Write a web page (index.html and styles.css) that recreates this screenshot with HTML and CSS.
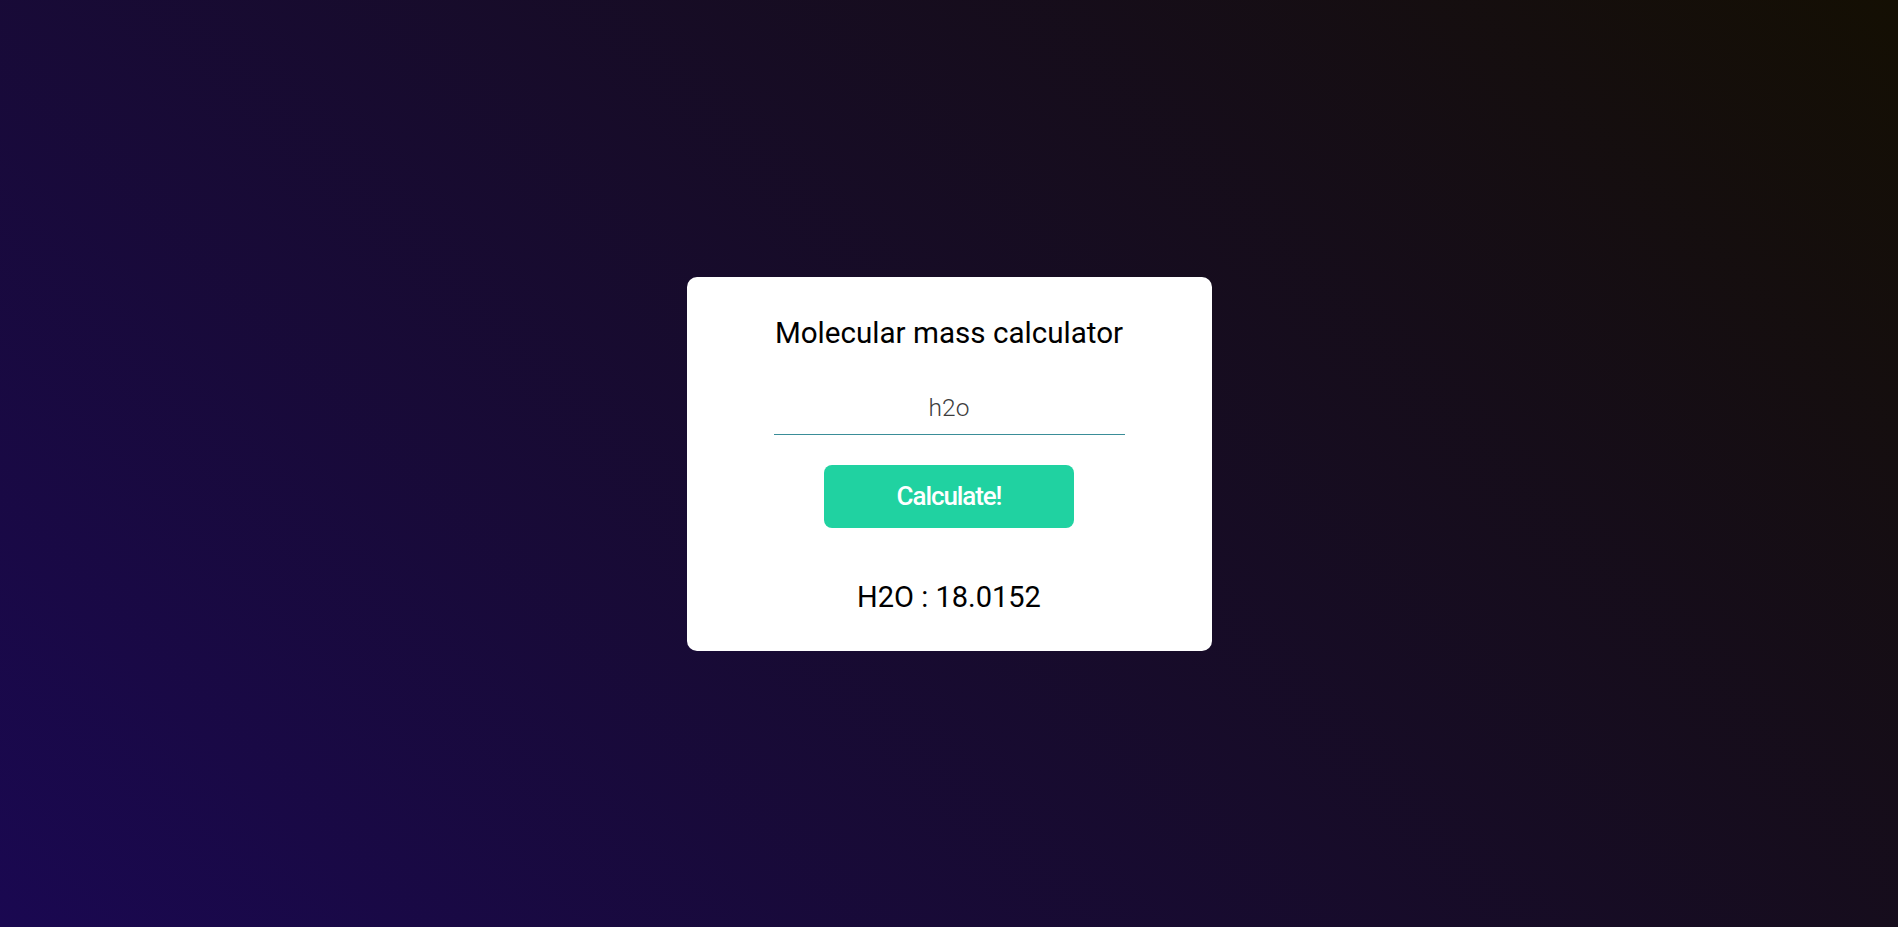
FILE: index.html
```html
<!DOCTYPE html>
<html lang="en">
<head>
<meta charset="utf-8">
<title>Molecular mass calculator</title>
<link rel="stylesheet" href="styles.css">
</head>
<body>
  <main class="card">
    <h1 class="title">Molecular mass calculator</h1>
    <input class="formula" type="text" value="h2o">
    <button class="calc">Calculate!</button>
    <p class="result">H2O : 18.0152</p>
  </main>
</body>
</html>
```

FILE: styles.css
```css
html, body {
  margin: 0;
  height: 100%;
}

body {
  display: flex;
  align-items: center;
  justify-content: center;
  background: linear-gradient(45deg, #1a0851 0%, #140f03 100%);
  font-family: Roboto, "Liberation Sans", sans-serif;
}

.card {
  box-sizing: border-box;
  width: 525px;
  height: 374px;
  background: #ffffff;
  border-radius: 10px;
  padding: 39px 0 0;
  display: flex;
  flex-direction: column;
  align-items: center;
}

.title {
  margin: 0;
  font-size: 29.6px;
  font-weight: 400;
  color: #000;
  line-height: 35px;
}

.formula {
  box-sizing: border-box;
  margin-top: 34px;
  width: 351px;
  padding: 9px 0 13px;
  border: none;
  border-bottom: 1px solid #3a8d98;
  outline: none;
  font-family: Roboto, "Liberation Sans", sans-serif;
  font-size: 24.5px;
  font-weight: 300;
  line-height: 27px;
  color: #3d3d3d;
  text-align: center;
  background: transparent;
}

.calc {
  margin-top: 30px;
  width: 250px;
  height: 63px;
  border: none;
  border-radius: 8px;
  background: #20d2a1;
  color: #fff;
  font-family: Roboto, "Liberation Sans", sans-serif;
  font-size: 26px;
  font-weight: 500;
  letter-spacing: -1.1px;
  cursor: pointer;
}

.result {
  margin: 52px 0 0;
  font-size: 29px;
  line-height: 34px;
  color: #000;
}
```
